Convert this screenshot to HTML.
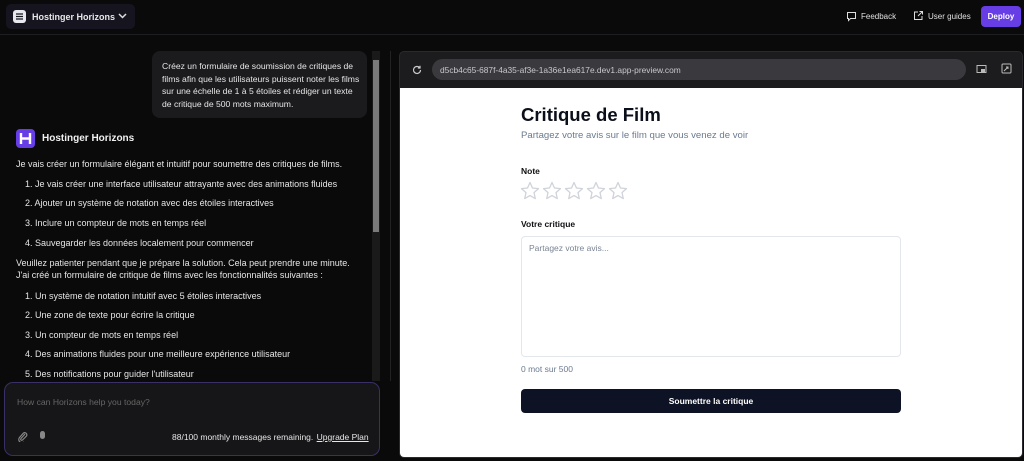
<!DOCTYPE html>
<html><head><meta charset="utf-8"><style>
*{box-sizing:border-box;margin:0;padding:0}
body{width:1024px;height:461px;background:#0a0a0b;font-family:"Liberation Sans",sans-serif;color:#e8e8ea;position:relative;overflow:hidden}
.abs{position:absolute}
.top{left:0;top:0;width:1024px;height:35px;border-bottom:1px solid #1e1e22}
.brand{left:6px;top:4px;width:129px;height:25px;background:#16151f;border-radius:5px}
.chat{font-size:9px;color:#e6e6e6}
.chat div{position:absolute;white-space:nowrap}
</style></head><body>
<div class="abs top"></div>
<div class="abs brand">
 <div class="abs" style="left:7px;top:6px;width:13px;height:13px;background:#e8e8f0;border-radius:3px"></div>
 <svg class="abs" style="left:9px;top:8px" width="9" height="9" viewBox="0 0 9 9"><path d="M1 2h7M1 4.5h7M1 7h7" stroke="#16151f" stroke-width="1.2"/></svg>
 <div class="abs" style="left:26px;top:8px;font-size:9px;font-weight:bold;color:#e8e8ea">Hostinger Horizons</div>
 <svg class="abs" style="left:112px;top:9px" width="9" height="6" viewBox="0 0 9 6"><path d="M1 1l3.5 3.5L8 1" stroke="#ddd" stroke-width="1.5" fill="none"/></svg>
</div>
<svg class="abs" style="left:846px;top:11px" width="11" height="11" viewBox="0 0 11 11"><path d="M1.5 1.5h8v6h-5l-2 2v-2h-1z" stroke="#ddd" fill="none"/></svg>
<div class="abs" style="left:861px;top:12px;font-size:8px;color:#e0e0e0">Feedback</div>
<svg class="abs" style="left:913px;top:10px" width="11" height="11" viewBox="0 0 11 11"><path d="M5 2H1.5v7.5H9V6M6.5 1.5h3v3M9.5 1.5L5 6" stroke="#ddd" fill="none"/></svg>
<div class="abs" style="left:928px;top:12px;font-size:8px;color:#e0e0e0">User guides</div>
<div class="abs" style="left:981px;top:6px;width:40px;height:21px;background:#673de6;border-radius:4px;font-size:8px;font-weight:bold;color:#fff;text-align:center;line-height:21px">Deploy</div>

<div class="abs" style="left:152px;top:51px;width:215px;height:67px;background:#1b1b1e;border-radius:8px"></div>
<div class="abs" style="left:162px;top:60px;font-size:8.6px;line-height:12.5px;color:#e6e6e6;white-space:nowrap">Créez un formulaire de soumission de critiques de<br>films afin que les utilisateurs puissent noter les films<br>sur une échelle de 1 à 5 étoiles et rédiger un texte<br>de critique de 500 mots maximum.</div>
<div class="abs" style="left:372px;top:51px;width:8px;height:330px;background:#1a1a1a"></div>
<div class="abs" style="left:373px;top:60px;width:6px;height:172px;background:#7a7a7a"></div>
<div class="abs" style="left:390px;top:51px;width:1px;height:330px;background:#222"></div>

<div class="abs" style="left:16px;top:129px;width:19px;height:19px;background:#673de6;border-radius:4px"></div>
<svg class="abs" style="left:19px;top:132px" width="13" height="13" viewBox="0 0 13 13"><path d="M2 1v11M11 1v11M2 6.5h9" stroke="#fff" stroke-width="2.4"/></svg>
<div class="abs" style="left:42px;top:133px;font-size:10px;font-weight:bold;color:#f0f0f0">Hostinger Horizons</div>
<div class="chat">
<div style="left:16px;top:159px">Je vais créer un formulaire élégant et intuitif pour soumettre des critiques de films.</div>
<div style="left:25px;top:179px">1. Je vais créer une interface utilisateur attrayante avec des animations fluides</div>
<div style="left:25px;top:198px">2. Ajouter un système de notation avec des étoiles interactives</div>
<div style="left:25px;top:218px">3. Inclure un compteur de mots en temps réel</div>
<div style="left:25px;top:238px">4. Sauvegarder les données localement pour commencer</div>
<div style="left:16px;top:258px">Veuillez patienter pendant que je prépare la solution. Cela peut prendre une minute.</div>
<div style="left:16px;top:270px">J'ai créé un formulaire de critique de films avec les fonctionnalités suivantes :</div>
<div style="left:25px;top:291px">1. Un système de notation intuitif avec 5 étoiles interactives</div>
<div style="left:25px;top:310px">2. Une zone de texte pour écrire la critique</div>
<div style="left:25px;top:330px">3. Un compteur de mots en temps réel</div>
<div style="left:25px;top:349px">4. Des animations fluides pour une meilleure expérience utilisateur</div>
<div style="left:25px;top:369px">5. Des notifications pour guider l'utilisateur</div>
</div>
<div class="abs" style="left:4px;top:382px;width:376px;height:74px;background:#161618;border:1px solid #3a2f66;border-radius:9px"></div>
<div class="abs" style="left:17px;top:397px;font-size:8.6px;color:#666">How can Horizons help you today?</div>
<svg class="abs" style="left:17px;top:431px" width="11" height="11" viewBox="0 0 11 11"><path d="M8 3L4 7.5a1 1 0 001.5 1.5L9.5 5a2.2 2.2 0 00-3-3L2.5 6.5a3.2 3.2 0 004.5 4.5" stroke="#888" stroke-width="1.2" fill="none"/></svg>
<div class="abs" style="left:40px;top:431px;width:5px;height:8px;background:#888;border-radius:3px"></div>
<div class="abs" style="left:172px;top:432px;font-size:8.5px;color:#e6e6e6">88/100 monthly messages remaining. <span style="margin-left:1px;text-decoration:underline">Upgrade Plan</span></div>

<div class="abs" style="left:399px;top:51px;width:624px;height:407px;background:#1c1c1e;border:1px solid #2a2a2e;border-radius:5px;overflow:hidden">
 <svg class="abs" style="left:12px;top:13px" width="10" height="10" viewBox="0 0 10 10"><path d="M8.5 5a3.5 3.5 0 11-1-2.5M8 .8v2.2H5.8" stroke="#ccc" stroke-width="1.2" fill="none"/></svg>
 <div class="abs" style="left:32px;top:7px;width:534px;height:21px;background:#3a3a3e;border-radius:11px"></div>
 <div class="abs" style="left:40px;top:13px;font-size:8.4px;color:#c8c8cc">d5cb4c65-687f-4a35-af3e-1a36e1ea617e.dev1.app-preview.com</div>
 <svg class="abs" style="left:576px;top:12px" width="11" height="11" viewBox="0 0 11 11"><rect x="1" y="1.5" width="9" height="7" stroke="#bbb" fill="none"/><rect x="5" y="5" width="4" height="3" fill="#bbb"/></svg>
 <svg class="abs" style="left:601px;top:11px" width="11" height="11" viewBox="0 0 11 11"><rect x="1" y="1" width="9" height="9" rx="1" stroke="#bbb" fill="none"/><path d="M3 8l4-4M5 4h2v2" stroke="#bbb" fill="none"/></svg>
 <div class="abs" style="left:0;top:36px;width:624px;height:371px;background:#fff"></div>
</div>
<div class="abs" style="left:521px;top:104px;font-size:18.5px;font-weight:bold;color:#0b0f1a">Critique de Film</div>
<div class="abs" style="left:521px;top:130px;font-size:9.6px;color:#6b7a90">Partagez votre avis sur le film que vous venez de voir</div>
<div class="abs" style="left:521px;top:166px;font-size:8.5px;font-weight:bold;color:#111">Note</div>
<svg class="abs" style="left:520px;top:181px" width="110" height="20" viewBox="0 0 110 20">
<g fill="none" stroke="#cfd3da" stroke-width="1.3" stroke-linejoin="round">
<path d="M10 1.5l2.5 5.5 6 .6-4.5 4 1.3 6L10 14.6 4.7 17.6 6 11.6 1.5 7.6l6-.6z"/>
<path d="M10 1.5l2.5 5.5 6 .6-4.5 4 1.3 6L10 14.6 4.7 17.6 6 11.6 1.5 7.6l6-.6z" transform="translate(22 0)"/>
<path d="M10 1.5l2.5 5.5 6 .6-4.5 4 1.3 6L10 14.6 4.7 17.6 6 11.6 1.5 7.6l6-.6z" transform="translate(44 0)"/>
<path d="M10 1.5l2.5 5.5 6 .6-4.5 4 1.3 6L10 14.6 4.7 17.6 6 11.6 1.5 7.6l6-.6z" transform="translate(66 0)"/>
<path d="M10 1.5l2.5 5.5 6 .6-4.5 4 1.3 6L10 14.6 4.7 17.6 6 11.6 1.5 7.6l6-.6z" transform="translate(88 0)"/>
</g></svg>
<div class="abs" style="left:521px;top:219px;font-size:8.5px;font-weight:bold;color:#111">Votre critique</div>
<div class="abs" style="left:521px;top:236px;width:380px;height:121px;border:1px solid #e3e6eb;border-radius:4px"></div>
<div class="abs" style="left:529px;top:243px;font-size:8.5px;color:#7a8494">Partagez votre avis...</div>
<div class="abs" style="left:521px;top:364px;font-size:8.5px;color:#6b7a90">0 mot sur 500</div>
<div class="abs" style="left:521px;top:389px;width:380px;height:24px;background:#0d1324;border-radius:4px;font-size:8.5px;font-weight:bold;color:#fff;text-align:center;line-height:24px">Soumettre la critique</div>
</body></html>
